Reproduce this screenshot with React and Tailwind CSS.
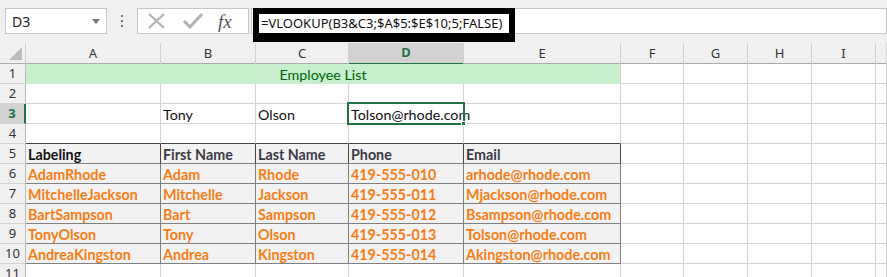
import React from "react";

const grid =
  "grid grid-cols-[26px_135px_95px_93px_115px_157px_63px_64px_64px_64px_1fr]";

const letters = ["A", "B", "C", "D", "E", "F", "G", "H", "I", ""];

const people = [
  ["AdamRhode", "Adam", "Rhode", "419-555-010", "arhode@rhode.com"],
  ["MitchelleJackson", "Mitchelle", "Jackson", "419-555-011", "Mjackson@rhode.com"],
  ["BartSampson", "Bart", "Sampson", "419-555-012", "Bsampson@rhode.com"],
  ["TonyOlson", "Tony", "Olson", "419-555-013", "Tolson@rhode.com"],
  ["AndreaKingston", "Andrea", "Kingston", "419-555-014", "Akingston@rhode.com"],
];

const cellFont = "font-['Lato','Liberation_Sans',sans-serif] text-[14.3px]";
const uiFont = "font-['Noto_Sans','Liberation_Sans',sans-serif]";

function RowHead({ n, active }) {
  return (
    <div
      className={`h-[20px] flex items-center justify-center border-b border-b-[#d4d4d4] ${uiFont} text-[13px] ${
        active
          ? "bg-[#d2d2d2] border-r-2 border-r-[#217346] text-[#217346] font-bold"
          : "bg-[#f0f0f0] border-r border-r-[#bcbcbc] text-[#333]"
      }`}
    >
      {n}
    </div>
  );
}

function Cell({ children, className = "" }) {
  return (
    <div
      className={`h-[20px] flex items-center px-[2px] pt-[2px] whitespace-nowrap overflow-visible border-r border-b ${cellFont} ${className}`}
    >
      {children}
    </div>
  );
}

function EmptyRow({ n, dark = false }) {
  return (
    <div className={grid}>
      <RowHead n={n} />
      {letters.map((l, i) => (
        <Cell
          key={i}
          className={`border-r-[#d4d4d4] ${
            dark && i < 5 ? "border-b-[#444]" : "border-b-[#d4d4d4]"
          }`}
        />
      ))}
    </div>
  );
}

export default function App() {
  return (
    <div className="relative w-[887px] h-[277px] overflow-hidden bg-white">
      {/* Formula bar */}
      <div className="h-[43px] bg-[#f0f0f0] flex items-start pt-[8px]">
        <div className={`ml-[5px] w-[102px] h-[26px] bg-white border border-[#c6c6c6] flex items-center justify-between pl-[6px] pr-[6px] ${uiFont} text-[14px] text-[#222]`}>
          <span>D3</span>
          <span className="w-0 h-0 border-l-[4px] border-r-[4px] border-t-[5px] border-l-transparent border-r-transparent border-t-[#777]" />
        </div>
        <div className="w-[30px] h-[26px] flex flex-col items-center justify-center gap-[3px]">
          <span className="w-[2px] h-[2px] bg-[#777]" />
          <span className="w-[2px] h-[2px] bg-[#777]" />
          <span className="w-[2px] h-[2px] bg-[#777]" />
        </div>
        <div className="w-[112px] h-[26px] bg-white border border-[#c6c6c6] flex items-center">
          <svg width="20" height="16" viewBox="0 0 20 16" className="ml-[9px]">
            <path d="M2 1 L17 15 M17 1 L2 15" stroke="#b3b3b3" strokeWidth="2.2" fill="none" />
          </svg>
          <svg width="22" height="16" viewBox="0 0 22 16" className="ml-[15px]">
            <path d="M2 8 L8 14 L20 1" stroke="#b3b3b3" strokeWidth="3" fill="none" />
          </svg>
          <span className="ml-[14px] font-['Liberation_Serif',serif] italic text-[19px] text-[#555] leading-none">
            fx
          </span>
        </div>
        <div className="ml-[2px] flex-1 h-[26px] bg-white border border-[#c6c6c6]" />
      </div>

      {/* Highlighted formula box */}
      <div className="absolute left-[253px] top-[8px] w-[262px] h-[34px] border-[6px] border-b-[9px] border-black bg-white flex items-center pl-[2px]">
        <span className={`${uiFont} text-[13px] text-[#111] whitespace-nowrap`}>
          =VLOOKUP(B3&amp;C3;$A$5:$E$10;5;FALSE)
        </span>
      </div>

      {/* Column headers */}
      <div className={`${grid} h-[21px] bg-[#f0f0f0] border-b border-b-[#ababab]`}>
        <div className="relative border-r border-r-[#d0d0d0]">
          <svg width="13" height="13" viewBox="0 0 13 13" className="absolute left-[9px] top-[4px]">
            <polygon points="13,0 13,13 0,13" fill="#bcbcbc" />
          </svg>
        </div>
        {letters.map((l, i) => (
          <div
            key={i}
            className={`flex items-center justify-center ${uiFont} text-[13px] ${
              l === "D"
                ? "bg-[#d2d2d2] text-[#217346] font-bold border-b-2 border-b-[#217346] border-r border-r-[#d0d0d0]"
                : "text-[#333] border-r border-r-[#d0d0d0]"
            }`}
          >
            {l}
          </div>
        ))}
      </div>

      {/* Row 1 */}
      <div className={grid}>
        <RowHead n={1} />
        <div className={`col-span-5 h-[20px] flex items-center justify-center pt-[2px] bg-[#c6efce] border-r border-r-[#d4d4d4] border-b border-b-[#c6efce] text-[#006100] ${cellFont}`}>
          Employee List
        </div>
        {letters.slice(5).map((l, i) => (
          <Cell key={i} className="border-r-[#d4d4d4] border-b-[#d4d4d4]" />
        ))}
      </div>

      <EmptyRow n={2} />

      {/* Row 3 */}
      <div className={grid}>
        <RowHead n={3} active />
        <Cell className="border-r-[#d4d4d4] border-b-[#d4d4d4]" />
        <Cell className="border-r-[#d4d4d4] border-b-[#d4d4d4] text-[#111]">Tony</Cell>
        <Cell className="border-r-[#d4d4d4] border-b-[#d4d4d4] text-[#111]">Olson</Cell>
        <Cell className="relative z-10 border-r-[#d4d4d4] border-b-[#d4d4d4] text-[#111]">
          Tolson@rhode.com
          <span className="absolute left-[-2px] top-[-2px] right-[-2px] bottom-[-2px] border-2 border-[#217346]" />
          <span className="absolute right-[-3px] bottom-[-3px] w-[5px] h-[5px] bg-[#217346] border border-white" />
        </Cell>
        {letters.slice(4).map((l, i) => (
          <Cell key={i} className="border-r-[#d4d4d4] border-b-[#d4d4d4]" />
        ))}
      </div>

      <EmptyRow n={4} dark />

      {/* Row 5: table header */}
      <div className={grid}>
        <RowHead n={5} />
        {["Labeling", "First Name", "Last Name", "Phone", "Email"].map((h, i) => (
          <Cell
            key={h}
            className={`bg-[#f2f2f2] font-bold border-r-[#444] border-b-[#808080] ${
              i === 0 ? "text-[#111]" : "text-[#3a3a46]"
            }`}
          >
            {h}
          </Cell>
        ))}
        {letters.slice(5).map((l, i) => (
          <Cell key={i} className="border-r-[#d4d4d4] border-b-[#d4d4d4]" />
        ))}
      </div>

      {people.map((p, r) => (
        <div key={r} className={grid}>
          <RowHead n={6 + r} />
          {p.map((v, i) => (
            <Cell
              key={i}
              className="bg-[#f2f2f2] font-bold text-[#fa7d12] border-r-[#808080] border-b-[#808080]"
            >
              {v}
            </Cell>
          ))}
          {letters.slice(5).map((l, i) => (
            <Cell key={i} className="border-r-[#d4d4d4] border-b-[#d4d4d4]" />
          ))}
        </div>
      ))}

      <EmptyRow n={11} />
    </div>
  );
}
